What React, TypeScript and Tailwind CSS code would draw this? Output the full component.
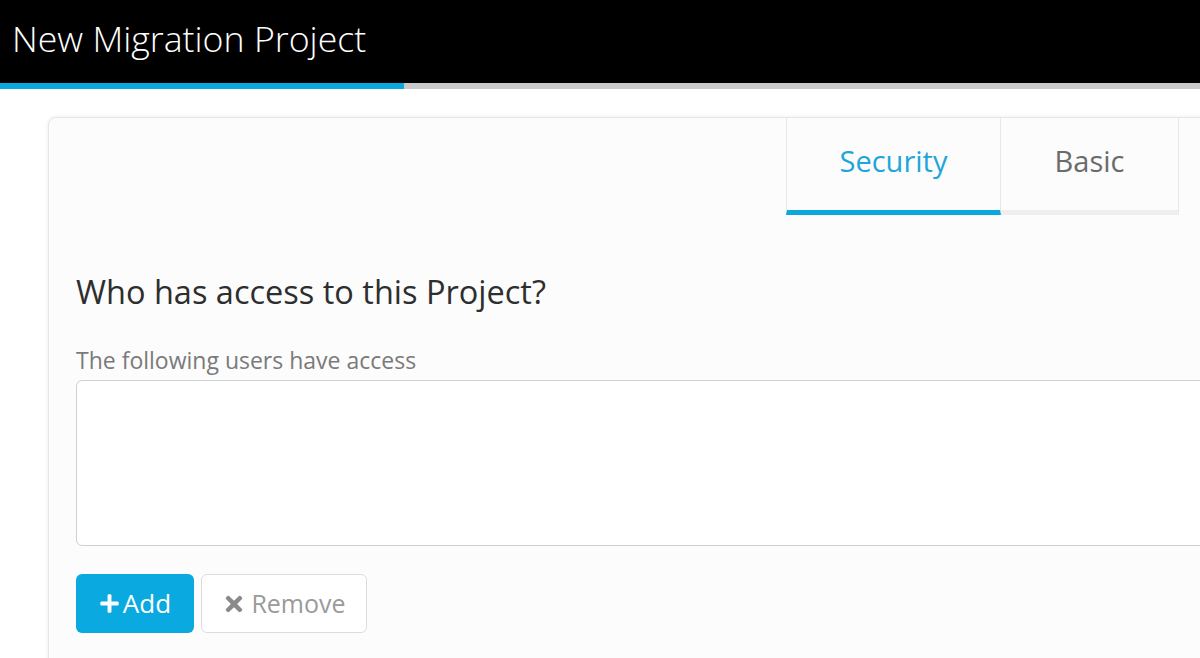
import React from 'react';
import { FaPlus, FaTimes } from 'react-icons/fa';

const App: React.FC = () => {
  return (
    <div className="w-[1200px] h-[658px] overflow-hidden bg-white font-['Open_Sans',sans-serif]">
      <header className="h-[83px] bg-black flex items-center px-3">
        <h1 className="text-white text-[35.7px] font-light leading-none pb-[6px]">New Migration Project</h1>
      </header>
      <div className="h-[6px] bg-[#c9c9c9]">
        <div className="h-full w-[404px] bg-[#0ba8de]" />
      </div>

      <div className="ml-[48px] mt-[28px] w-[1180px] h-[600px] bg-[#fcfcfc] border border-[#e6e6e6] rounded-lg shadow-[0_0_4px_rgba(0,0,0,0.08)]">
        <div className="flex justify-end pr-[48px]">
          <div className="w-[215px] h-[97px] pb-[6px] flex items-center justify-center border-l border-r border-[#e8e8e8] border-b-[5px] border-b-[#0ba8de] text-[#1fa6d8] text-[29px]">
            Security
          </div>
          <div className="w-[178px] h-[97px] pb-[6px] flex items-center justify-center border-r border-[#e8e8e8] border-b-[5px] border-b-[#eeeeee] text-[#6b6b6b] text-[29px]">
            Basic
          </div>
        </div>

        <div className="px-[27px]">
          <h2 className="mt-[57px] text-[32.5px] leading-[40px] text-[#2e2e2e]">Who has access to this Project?</h2>
          <p className="mt-[33px] text-[23px] leading-[30px] text-[#7a7a7a]">The following users have access</p>
          <div className="mt-[5px] h-[166px] w-[1160px] bg-white border border-[#cfcfcf] rounded-md" />
          <div className="mt-[28px] flex gap-[7px]">
            <button className="w-[118px] h-[59px] bg-[#0aa9e0] rounded-md text-white text-[26px] flex items-center justify-center gap-[3px]">
              <FaPlus className="w-[21px] h-[21px]" />
              <span>Add</span>
            </button>
            <button className="w-[166px] h-[59px] bg-white border border-[#dcdcdc] rounded-md text-[#9a9a9a] text-[25px] flex items-center justify-center gap-[5px]">
              <FaTimes className="w-[24px] h-[24px] text-[#8a8a8a]" />
              <span>Remove</span>
            </button>
          </div>
        </div>
      </div>
    </div>
  );
};

export default App;
